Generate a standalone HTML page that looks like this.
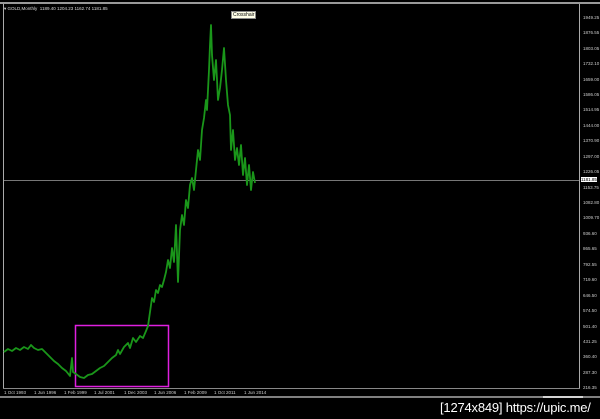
<!DOCTYPE html>
<html><head><style>
body{margin:0;width:600px;height:419px;background:#000;overflow:hidden;position:relative;font-family:"Liberation Sans",sans-serif}
.t{position:absolute;color:#ccc;font-size:4.5px;white-space:nowrap}
</style></head><body>
<div style="position:absolute;left:0;top:2px;width:600px;height:2px;background:#999"></div>
<svg width="600" height="419" style="position:absolute;left:0;top:0">
<line x1="3.5" y1="4" x2="3.5" y2="388" stroke="#aaa"/>
<line x1="579.5" y1="4" x2="579.5" y2="388" stroke="#aaa"/>
<line x1="3" y1="388.5" x2="580" y2="388.5" stroke="#888"/>
<line x1="0" y1="397" x2="600" y2="397" stroke="#aaa" stroke-width="1.5"/>
<line x1="543" y1="397" x2="583" y2="397" stroke="#fff" stroke-width="1.5"/>
<line x1="4" y1="180.5" x2="579" y2="180.5" stroke="#777"/>
<rect x="75.5" y="325.5" width="93" height="61" fill="none" stroke="#e020e0" stroke-width="1.5"/>
<polyline fill="none" stroke="#1a961a" stroke-width="1.8" stroke-linejoin="round" points="4,352 8,349 12,351 16,348 20,350 24,347 28,349 31,345 34,348 38,350 42,349 46,353 50,357 54,361 58,364 62,368 66,371 70,376 72,358 73,372 76,374 80,377 84,378 88,375 92,374 96,371 100,368 104,366 108,362 112,358 116,355 118,350 120,354 124,347 128,343 130,348 133,338 136,342 140,336 143,338 146,331 148,326 150,312 152,298 154,302 156,290 158,293 160,285 162,287 164,280 166,272 168,260 170,268 172,248 174,262 176,225 178,282 180,230 182,215 184,225 186,200 188,208 190,185 192,178 194,190 196,170 198,150 200,160 202,130 204,118 206,100 207,110 209,70 210,45 211,25 212,55 214,80 216,60 218,100 220,88 222,70 224,48 226,80 228,105 230,115 231,150 233,130 235,160 237,148 239,165 241,145 243,175 245,158 247,185 249,165 251,190 253,172 255,183"/>
</svg>
<div class="t" style="left:4px;top:6px;color:#ddd">▾ GOLD,Monthly &nbsp;1189.40 1204.23 1162.74 1181.85</div>
<div style="position:absolute;left:231px;top:11px;background:#ffffe8;color:#000;font-size:5px;border:1px solid #888;padding:0 1px">Crosshair</div>
<div class="t" style="left:583px;top:15px">1949.25</div>
<div class="t" style="left:583px;top:30px">1876.55</div>
<div class="t" style="left:583px;top:46px">1803.05</div>
<div class="t" style="left:583px;top:61px">1732.10</div>
<div class="t" style="left:583px;top:77px">1659.00</div>
<div class="t" style="left:583px;top:92px">1586.05</div>
<div class="t" style="left:583px;top:107px">1514.95</div>
<div class="t" style="left:583px;top:123px">1444.00</div>
<div class="t" style="left:583px;top:138px">1370.90</div>
<div class="t" style="left:583px;top:154px">1297.00</div>
<div class="t" style="left:583px;top:169px">1226.05</div>
<div class="t" style="left:581px;top:177px;background:#fff;color:#000">1181.85</div>
<div class="t" style="left:583px;top:185px">1153.75</div>
<div class="t" style="left:583px;top:200px">1082.80</div>
<div class="t" style="left:583px;top:215px">1009.70</div>
<div class="t" style="left:583px;top:231px">936.60</div>
<div class="t" style="left:583px;top:246px">865.65</div>
<div class="t" style="left:583px;top:262px">792.55</div>
<div class="t" style="left:583px;top:277px">719.60</div>
<div class="t" style="left:583px;top:293px">646.50</div>
<div class="t" style="left:583px;top:308px">574.50</div>
<div class="t" style="left:583px;top:324px">501.40</div>
<div class="t" style="left:583px;top:339px">431.25</div>
<div class="t" style="left:583px;top:354px">360.40</div>
<div class="t" style="left:583px;top:370px">287.30</div>
<div class="t" style="left:583px;top:385px">216.35</div>
<div class="t" style="left:4px;top:390px">1 Oct 1993</div>
<div class="t" style="left:34px;top:390px">1 Jun 1996</div>
<div class="t" style="left:64px;top:390px">1 Feb 1999</div>
<div class="t" style="left:94px;top:390px">1 Jul 2001</div>
<div class="t" style="left:124px;top:390px">1 Dec 2003</div>
<div class="t" style="left:154px;top:390px">1 Jun 2006</div>
<div class="t" style="left:184px;top:390px">1 Feb 2009</div>
<div class="t" style="left:214px;top:390px">1 Oct 2011</div>
<div class="t" style="left:244px;top:390px">1 Jun 2014</div>
<div style="position:absolute;left:440px;top:400px;color:#fff;font-size:13px;font-family:'Liberation Sans',sans-serif;white-space:nowrap;letter-spacing:-0.2px">[1274x849] https://upic.me/</div>
</body></html>
